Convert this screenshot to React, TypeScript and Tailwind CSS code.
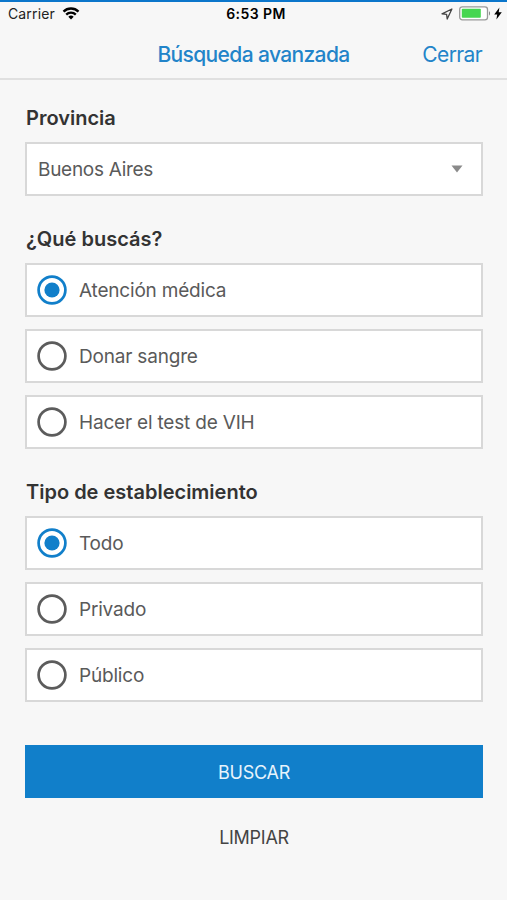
import { useState } from 'react';

const searchOptions = ['Atención médica', 'Donar sangre', 'Hacer el test de VIH'];
const typeOptions = ['Todo', 'Privado', 'Público'];

function StatusBar() {
  return (
    <div className="flex h-[25px] items-center border-t-2 border-[#0b76cb] pl-2 pr-[5px] text-black">
      <div className="flex flex-1 items-center gap-[7px]">
        <span className="text-[14px] leading-none tracking-[0.01em] text-[#222]">Carrier</span>
        <svg width="18" height="13" viewBox="0 0 17 13" fill="none" stroke="currentColor" strokeWidth="2.3">
          <path d="M1 4.6a10.6 10.6 0 0 1 15 0" />
          <path d="M3.7 7.6a6.8 6.8 0 0 1 9.6 0" />
          <path d="M8.5 12.6 5.8 9.8a3.9 3.9 0 0 1 5.4 0Z" fill="currentColor" stroke="none" />
        </svg>
      </div>
      <span className="pl-[2px] text-[14px] font-semibold leading-none tracking-[0.03em]">6:53 PM</span>
      <div className="flex flex-1 items-center justify-end">
        <svg width="12" height="12" viewBox="0 0 12 12" fill="none" stroke="#444" strokeWidth="1.3" strokeLinejoin="round">
          <path d="M10.9 1 1 5.8l4.6.6.6 4.6Z" />
        </svg>
        <svg className="ml-[6px]" width="32" height="15" viewBox="0 0 32 15">
          <rect x="0.7" y="0.8" width="27.8" height="13" rx="2.6" fill="#fff" stroke="#999" strokeWidth="1.3" />
          <rect x="2.8" y="2.8" width="19" height="9" rx="0.8" fill="#46d650" />
          <path d="M30 5.2c1.4.5 1.4 3.7 0 4.2Z" fill="#888" />
        </svg>
        <svg className="ml-[3px]" width="8" height="13" viewBox="0 0 8 13" fill="currentColor">
          <path d="M5.4.4.2 7.6h3L2.4 12.6 7.8 5.2H4.7Z" />
        </svg>
      </div>
    </div>
  );
}

function RadioGroup({ title, options }: { title: string; options: string[] }) {
  const [selected, setSelected] = useState(options[0]);

  return (
    <section>
      <h2 className="mb-3 h-6 pl-px text-[20px] font-semibold leading-6">{title}</h2>
      <div className="space-y-3">
        {options.map((option) => (
          <button
            key={option}
            onClick={() => setSelected(option)}
            className="flex h-[54px] w-full items-center border-2 border-[#d8d8d8] bg-white pl-[10px] text-left text-[19px] tracking-[-0.01em] text-[#5a5a5a]"
          >
            <svg
              className={option === selected ? 'text-[#117fca]' : 'text-[#5c5c5c]'}
              width="30"
              height="30"
              viewBox="0 0 30 30"
            >
              <circle cx="15" cy="15" r="13.4" fill="none" stroke="currentColor" strokeWidth="2.7" />
              {option === selected && <circle cx="15" cy="15" r="7.6" fill="currentColor" />}
            </svg>
            <span className="ml-3 pt-[2px]">{option}</span>
          </button>
        ))}
      </div>
    </section>
  );
}

export default function App() {
  return (
    <div className="h-[900px] w-[507px] overflow-hidden bg-[#f7f7f7] font-['Inter','Liberation_Sans',sans-serif] text-[#333]">
      <StatusBar />

      {/* Header */}
      <header className="grid h-[55px] grid-cols-[1fr_auto_1fr] items-center border-b-2 border-[#e0e0e0] px-[25px] pt-[6px] text-[21px] text-[#2284c9]">
        <span />
        <h1 className="font-medium tracking-[-0.03em]">Búsqueda avanzada</h1>
        <button className="justify-self-end tracking-[-0.03em]">Cerrar</button>
      </header>

      <main className="pl-[25px] pr-6 pt-[26px]">
        <h2 className="mb-3 h-6 pl-px text-[20px] font-semibold leading-6">Provincia</h2>
        <button className="mb-[31px] flex h-[54px] w-full items-center justify-between border-2 border-[#d8d8d8] bg-white pl-[11px] pr-[18px] text-[19px] tracking-[-0.015em] text-[#5a5a5a]">
          <span className="pt-[2px]">Buenos Aires</span>
          <svg width="12" height="8" viewBox="0 0 12 8" fill="#8a8a8a">
            <path d="M.5.5h11L6 7.5Z" />
          </svg>
        </button>

        <div className="space-y-[31px]">
          <RadioGroup title="¿Qué buscás?" options={searchOptions} />
          <RadioGroup title="Tipo de establecimiento" options={typeOptions} />
        </div>

        {/* Actions */}
        <button className="mt-[43px] block h-[53px] w-full bg-[#117fca] pt-px text-[18px] tracking-[-0.015em] text-[#e6f3fc]">BUSCAR</button>
        <button className="mt-[13px] block h-[53px] w-full text-[18px] tracking-[-0.015em] text-[#444]">LIMPIAR</button>
      </main>
    </div>
  );
}
